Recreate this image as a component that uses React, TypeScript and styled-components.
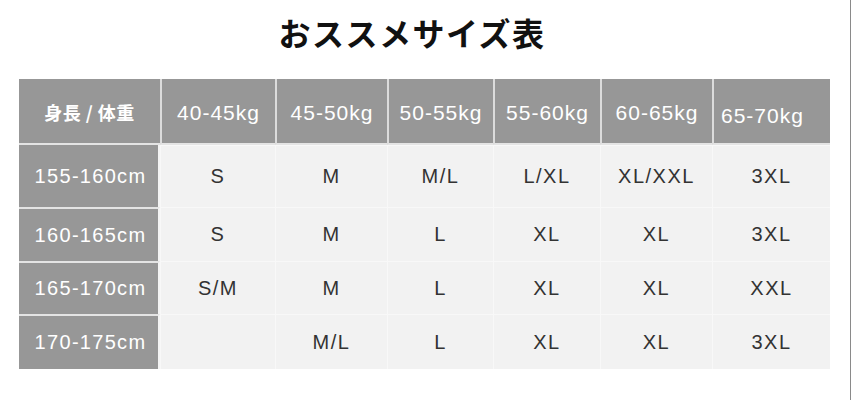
import React from "react";
import styled, { createGlobalStyle } from "styled-components";

const GlobalStyle = createGlobalStyle`
  html, body {
    margin: 0;
    padding: 0;
    background: #ffffff;
  }
  body {
    font-family: "Liberation Sans", "Noto Sans CJK JP", sans-serif;
  }
`;

const Page = styled.div`
  width: 850px;
  height: 400px;
  border-right: 1px solid #8a8a8a;
  background: #ffffff;
  display: flex;
  flex-direction: column;
  box-sizing: content-box;
`;

const Title = styled.h1`
  margin: 0;
  padding: 14px 26px 0 0;
  height: 79px;
  box-sizing: border-box;
  text-align: center;
  font-family: "Noto Sans CJK JP", sans-serif;
  font-weight: 700;
  font-size: 32px;
  line-height: 36px;
  color: #111111;
  letter-spacing: 1.5px;
`;

const Table = styled.div`
  margin-left: 19px;
  width: 811px;
  display: grid;
  grid-template-columns: 141px 115px 112px 106px 107px 112px 118px;
  grid-template-rows: 66px 62px 54px 53px 55px;
  background: #f2f2f2;
`;

const HeadCell = styled.div<{ $first?: boolean; $offset?: boolean }>`
  background: #979797;
  color: #ffffff;
  display: flex;
  align-items: center;
  justify-content: ${(p) => (p.$offset ? "flex-start" : "center")};
  padding-left: ${(p) => (p.$offset ? "7px" : "0")};
  padding-top: ${(p) => (p.$offset ? "9px" : p.$first ? "2px" : "4px")};
  box-sizing: border-box;
  border-left: ${(p) => (p.$first ? "none" : "2px solid #dcdcdc")};
  border-bottom: 2px solid #e4e4e4;
  font-family: ${(p) =>
    p.$first ? `"Noto Sans CJK JP", sans-serif` : `"Liberation Sans", sans-serif`};
  font-size: ${(p) => (p.$first ? "18px" : "21px")};
  font-weight: ${(p) => (p.$first ? 700 : 400)};
  letter-spacing: ${(p) => (p.$first ? "0.5px" : "1px")};
  white-space: pre;
`;

const RowHead = styled.div<{ $top?: boolean }>`
  background: #979797;
  color: #ffffff;
  display: flex;
  align-items: center;
  justify-content: center;
  padding-left: 4px;
  box-sizing: border-box;
  border-top: ${(p) => (p.$top ? "none" : "2px solid #e4e4e4")};
  border-right: 2px solid #f4f4f4;
  font-size: 20px;
  letter-spacing: 1.3px;
`;

const Cell = styled.div`
  display: flex;
  align-items: center;
  justify-content: center;
  box-sizing: border-box;
  border-left: 1px solid #f8f8f8;
  border-top: 1px solid #f8f8f8;
  color: #333333;
  font-size: 20px;
  letter-spacing: 1.5px;
`;

const weights = ["40-45kg", "45-50kg", "50-55kg", "55-60kg", "60-65kg", "65-70kg"];

const rows: { height: string; sizes: string[] }[] = [
  { height: "155-160cm", sizes: ["S", "M", "M/L", "L/XL", "XL/XXL", "3XL"] },
  { height: "160-165cm", sizes: ["S", "M", "L", "XL", "XL", "3XL"] },
  { height: "165-170cm", sizes: ["S/M", "M", "L", "XL", "XL", "XXL"] },
  { height: "170-175cm", sizes: ["", "M/L", "L", "XL", "XL", "3XL"] },
];

export default function App() {
  return (
    <>
      <GlobalStyle />
      <Page>
        <Title>おススメサイズ表</Title>
        <Table>
          <HeadCell $first>{"身長 / 体重"}</HeadCell>
          {weights.map((w, i) => (
            <HeadCell key={w} $offset={i === weights.length - 1}>
              {w}
            </HeadCell>
          ))}
          {rows.map((r, ri) => (
            <React.Fragment key={r.height}>
              <RowHead $top={ri === 0}>{r.height}</RowHead>
              {r.sizes.map((s, ci) => (
                <Cell key={ci}>{s}</Cell>
              ))}
            </React.Fragment>
          ))}
        </Table>
      </Page>
    </>
  );
}
